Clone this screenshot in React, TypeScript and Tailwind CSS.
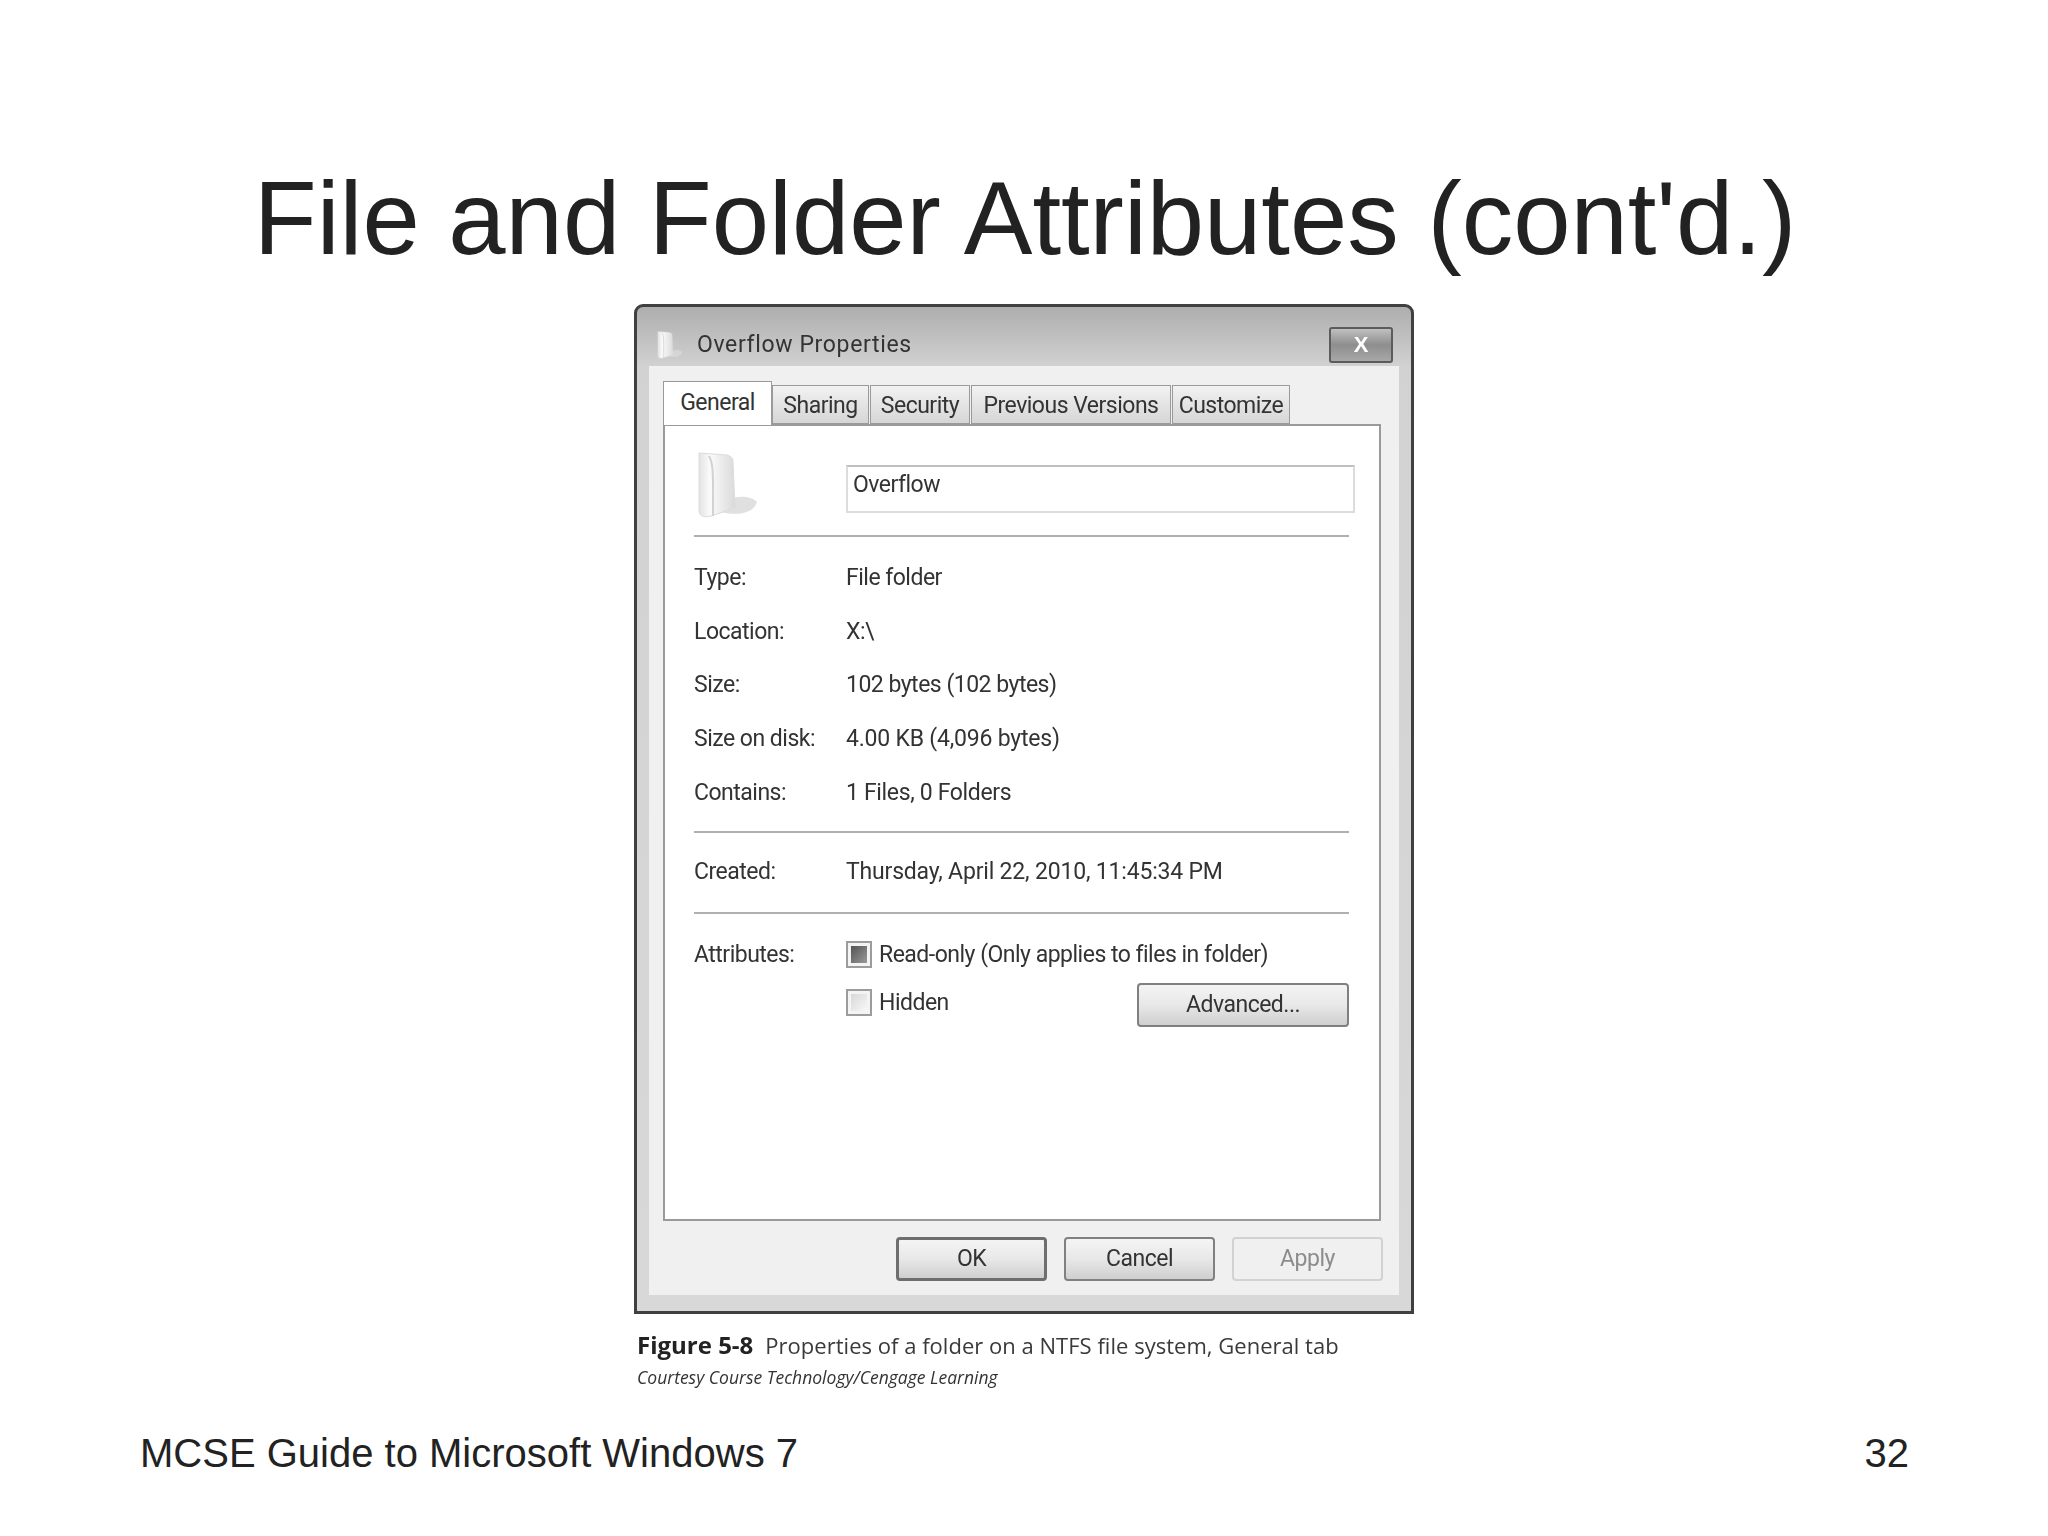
const sans = "font-['Liberation_Sans',Arial,sans-serif]";
const ui = "font-['Roboto','Liberation_Sans',sans-serif] text-[23px] text-[#333333] leading-[28px]";
const tight = "tracking-[-0.022em]";

function Folder({ w, h, id }: { w: number; h: number; id: string }) {
  return (
    <svg width={w} height={h} viewBox="0 0 62 70" className="shrink-0">
      <defs>
        <linearGradient id={id} x1="0" x2="1" y1="0" y2="0">
          <stop offset="0" stopColor="#e2e2e2" />
          <stop offset="0.3" stopColor="#fbfbfb" />
          <stop offset="1" stopColor="#dadada" />
        </linearGradient>
      </defs>
      <path d="M24 62 C40 66 56 64 60 52 C54 46 44 46 36 48 Z" fill="#d8d8d8" opacity="0.8" />
      <path d="M2 3 L30 5 C34 6 36 8 36 12 L38 58 L14 66 C6 68 2 66 2 60 Z" fill={`url(#${id})`} stroke="#dcdcdc" strokeWidth="1" />
      <path d="M12 6 C17 14 16 30 16 66" fill="none" stroke="#d2d2d2" strokeWidth="2" />
    </svg>
  );
}

function Tab({ label, w, active }: { label: string; w: string; active?: boolean }) {
  return (
    <div
      className={
        active
          ? `${w} h-[44px] -mb-px z-10 relative bg-white border border-b-0 border-[#9a9a9a] flex items-start justify-center pt-[7px] ${ui} ${tight}`
          : `${w} h-[39px] border border-[#9a9a9a] bg-gradient-to-b from-[#f2f2f2] to-[#d6d6d6] flex items-center justify-center pt-[2px] ${ui} ${tight}`
      }
    >
      {label}
    </div>
  );
}

function Btn({ label, w, strong, disabled }: { label: string; w: string; strong?: boolean; disabled?: boolean }) {
  const base = `${w} h-[44px] rounded-[4px] flex items-center justify-center ${ui} ${tight} `;
  if (disabled) return <div className={base + "border-2 border-[#d2d2d2] bg-[#f0f0f0] !text-[#8c8c8c]"}>{label}</div>;
  return (
    <div className={base + (strong ? "border-[3px] border-[#6e6e6e] " : "border-2 border-[#808080] ") + "bg-gradient-to-b from-[#f4f4f4] via-[#e8e8e8] to-[#cfcfcf]"}>
      {label}
    </div>
  );
}

function Row({ k, v, vt = tight }: { k: string; v: string; vt?: string }) {
  return (
    <div className="grid grid-cols-[152px_1fr] h-[53.8px] items-center">
      <span className={`${ui} ${tight}`}>{k}</span>
      <span className={`${ui} ${vt}`}>{v}</span>
    </div>
  );
}

function Check({ on }: { on?: boolean }) {
  return (
    <div className="w-[26px] h-[27px] border-2 border-[#9c9c9c] bg-[#f4f4f4] p-[3px] shrink-0">
      <div className={on ? "w-full h-full bg-gradient-to-br from-[#555555] to-[#9a9a9a]" : "w-full h-full bg-gradient-to-br from-[#d8d8d8] to-[#f8f8f8]"} />
    </div>
  );
}

export default function App() {
  return (
    <div className={`w-[2048px] h-[1536px] bg-white overflow-hidden flex flex-col ${sans}`}>
      <h1 className="text-[103px] leading-[118px] text-[#222222] text-center mt-[160px] w-[2050px] font-normal whitespace-nowrap">
        File and Folder Attributes (cont'd.)
      </h1>

      <div className="ml-[634px] mt-[26px] w-[780px] h-[1010px] flex flex-col border-[3px] border-[#404040] rounded-t-[9px] bg-gradient-to-b from-[#aeaeae] via-[#d2d2d2] via-[6%] to-[#d8d8d8] blur-[0.5px]">
        <div className="h-[59px] shrink-0 flex items-center pt-[16px] pl-[20px] pr-[18px]">
          <Folder w={26} h={34} id="f1" />
          <span className={`${ui} ml-[14px] tracking-[0.028em]`}>Overflow Properties</span>
          <div className="ml-auto w-[64px] h-[36px] rounded-[3px] border-2 border-[#5c5c5c] bg-gradient-to-b from-[#c0c0c0] via-[#8e8e8e] to-[#a8a8a8] flex items-center justify-center text-white text-[22px] font-bold leading-none">
            X
          </div>
        </div>

        <div className="flex-1 mx-[12px] mb-[16px] bg-[#f0f0f0] pt-[15px] pl-[14px] pr-[16px] flex flex-col">
          <div className="flex items-end">
            <Tab label="General" w="w-[109px]" active />
            <Tab label="Sharing" w="w-[97px]" />
            <div className="w-px" />
            <Tab label="Security" w="w-[100px]" />
            <div className="w-px" />
            <Tab label="Previous Versions" w="w-[200px]" />
            <div className="w-px" />
            <Tab label="Customize" w="w-[118px]" />
          </div>
          <div className="h-[797px] w-[718px] border-2 border-[#9a9a9a] bg-white pt-[24px] pl-[29px] pr-[30px] flex flex-col">
            <div className="flex items-start h-[87px] border-b-2 border-[#b0b0b0] shrink-0">
              <div className="w-[152px] pl-[3px] shrink-0">
                <Folder w={62} h={70} id="f2" />
              </div>
              <div className={`mt-[15px] w-[509px] shrink-0 h-[48px] border-2 border-[#dcdcdc] border-t-[#c0c0c0] flex items-center pl-[5px] pb-[8px] ${ui} ${tight}`}>Overflow</div>
            </div>
            <div className="pt-[14px] pb-[11px] border-b-2 border-[#b0b0b0]">
              <Row k="Type:" v="File folder" />
              <Row k="Location:" v="X:\" />
              <Row k="Size:" v="102 bytes (102 bytes)" />
              <Row k="Size on disk:" v="4.00 KB (4,096 bytes)" vt="tracking-[-0.009em]" />
              <Row k="Contains:" v="1 Files, 0 Folders" vt="tracking-[-0.015em]" />
            </div>
            <div className="h-[81px] shrink-0 border-b-2 border-[#b0b0b0] flex items-center">
              <div className="w-full"><Row k="Created:" v="Thursday, April 22, 2010, 11:45:34 PM" vt="tracking-[-0.008em]" /></div>
            </div>
            <div className="grid grid-cols-[152px_1fr] pt-[27px]">
              <span className={`${ui} ${tight}`}>Attributes:</span>
              <div className="flex flex-col">
                <div className="flex items-center gap-[7px]">
                  <Check on />
                  <span className={`${ui} ${tight}`}>Read-only (Only applies to files in folder)</span>
                </div>
                <div className="flex items-start mt-[14px]">
                  <div className="flex items-center gap-[7px] mt-[6px]">
                    <Check />
                    <span className={`${ui} ${tight}`}>Hidden</span>
                  </div>
                  <div className="ml-auto">
                    <Btn label="Advanced..." w="w-[212px]" />
                  </div>
                </div>
              </div>
            </div>
          </div>
          <div className="flex justify-end gap-[17px] mt-[16px]">
            <Btn label="OK" w="w-[151px]" strong />
            <Btn label="Cancel" w="w-[151px]" />
            <Btn label="Apply" w="w-[151px]" disabled />
          </div>
        </div>
      </div>

      <div className="ml-[637px] mt-[16px] text-[#3a3a3a] font-['Open_Sans',sans-serif] text-[22px] leading-[30px] whitespace-nowrap tracking-[0.001em] blur-[0.3px]">
        <b className="font-bold text-[#222222] text-[24px] mr-[12px] tracking-normal">Figure 5-8</b>Properties of a folder on a NTFS file system, General tab
      </div>
      <div className="ml-[637px] mt-[6px] text-[#333333] font-['Open_Sans',sans-serif] italic text-[17.5px] leading-[22px] whitespace-nowrap blur-[0.3px]">
        Courtesy Course Technology/Cengage Learning
      </div>

      <div className="flex justify-between pl-[140px] pr-[139px] mt-[42px] text-[40px] leading-[46px] text-[#222222]">
        <span>MCSE Guide to Microsoft Windows 7</span>
        <span>32</span>
      </div>
    </div>
  );
}
